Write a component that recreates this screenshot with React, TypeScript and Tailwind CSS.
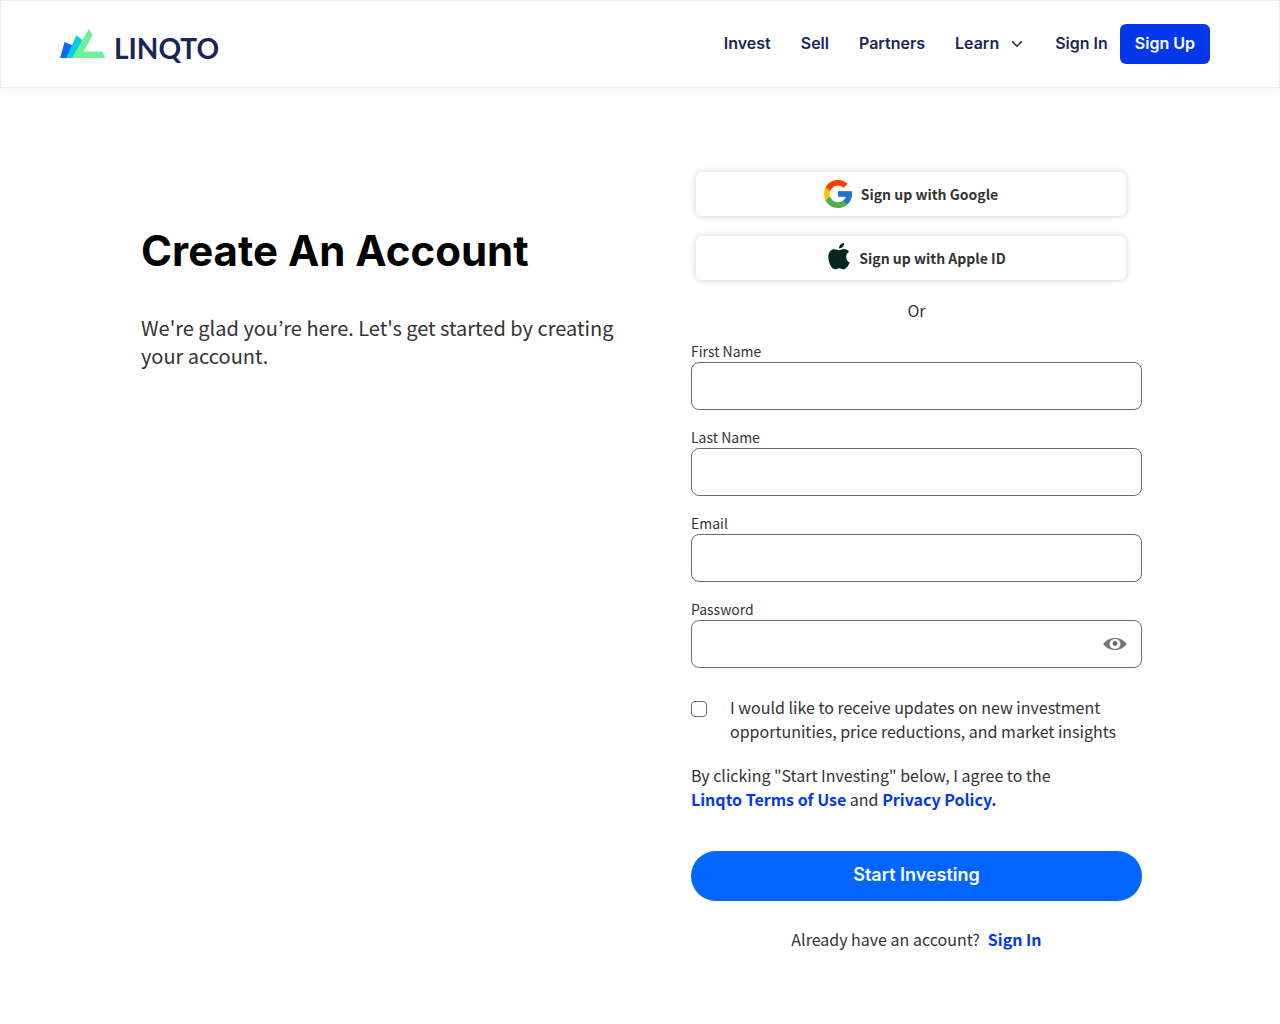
import { useState } from 'react';

const navLinks = [
  { href: '#invest', label: 'Invest' },
  { href: '#sell', label: 'Sell' },
  { href: '#partners', label: 'Partners' },
];

const Logo = () => (
  <a href="#home" className="flex items-end gap-2 text-[#1a2557]" aria-label="Linqto">
    <svg width="46" height="30" viewBox="0 0 46 30" aria-hidden="true">
      <path d="M4.7 13 L12.5 16.5 L7 29 H0 Z" fill="#0a66ff" />
      <path d="M16.4 6.3 L23 11.5 L14 29 H6.5 Z" fill="#06d0e8" />
      <path d="M28.7 0 L32.7 6.2 L23.5 22.5 H42.3 L45.5 29 H12 Z" fill="#6cf09a" />
    </svg>
    <span className="font-['Lato',sans-serif] text-[28px] leading-[22px] font-bold">LINQTO</span>
  </a>
);

const Header = () => (
  <header className="flex items-center justify-between border border-[#e8ebfd] bg-white pt-[23px] pr-[69px] pb-[23px] pl-[59px] shadow-[0_2px_8px_rgba(60,60,220,0.07)]">
    <Logo />
    <nav className="flex h-10 items-center font-['Inter',sans-serif] text-[16px] font-semibold text-[#1a2557]">
      <div className="flex gap-[30px] pb-0.5">
        {navLinks.map((link) => (
          <a key={link.href} href={link.href}>
            {link.label}
          </a>
        ))}
        <button type="button" className="flex items-center gap-3">
          Learn
          <svg width="12" height="8" viewBox="0 0 12 8" fill="none" stroke="#333" strokeWidth="1.6" aria-hidden="true" className="mt-0.5">
            <path d="M1.2 1.4 L6 6.2 L10.8 1.4" />
          </svg>
        </button>
      </div>
      <a href="#signin" className="pr-3 pb-0.5 pl-8">
        Sign In
      </a>
      <a href="#signup" className="h-10 rounded-md bg-[#0338ea] px-[15px] leading-[38px] text-white">
        Sign Up
      </a>
    </nav>
  </header>
);

const GoogleIcon = () => (
  <svg width="28" height="28" viewBox="4 4 40 40" aria-hidden="true">
    <path fill="#FFC107" d="M43.611,20.083H42V20H24v8h11.303c-1.649,4.657-6.08,8-11.303,8c-6.627,0-12-5.373-12-12s5.373-12,12-12c3.059,0,5.842,1.154,7.961,3.039l5.657-5.657C34.046,6.053,29.268,4,24,4C12.955,4,4,12.955,4,24s8.955,20,20,20s20-8.955,20-20C44,22.659,43.862,21.35,43.611,20.083z" />
    <path fill="#FF3D00" d="M6.306,14.691l6.571,4.819C14.655,15.108,18.961,12,24,12c3.059,0,5.842,1.154,7.961,3.039l5.657-5.657C34.046,6.053,29.268,4,24,4C16.318,4,9.656,8.337,6.306,14.691z" />
    <path fill="#4CAF50" d="M24,44c5.166,0,9.86-1.977,13.409-5.192l-6.19-5.238C29.211,35.091,26.715,36,24,36c-5.202,0-9.619-3.317-11.283-7.946l-6.522,5.025C9.505,39.556,16.227,44,24,44z" />
    <path fill="#1976D2" d="M43.611,20.083H42V20H24v8h11.303c-0.792,2.237-2.231,4.166-4.087,5.571l6.19,5.238C36.971,39.205,44,34,44,24C44,22.659,43.862,21.35,43.611,20.083z" />
  </svg>
);

const AppleIcon = () => (
  <svg width="22" height="27" viewBox="0 0 22 27" fill="#03251f" aria-hidden="true" className="mb-1 ml-3">
    <path d="M11 7.200 C9.500 7.200 8.500 6.200 6.300 6.200 C2.900 6.200 0.300 9.100 0.300 14 C0.300 19.600 3.600 26.300 7.200 26.300 C8.800 26.300 9.500 25.200 11.400 25.200 C13.300 25.200 13.900 26.300 15.500 26.300 C18.300 26.300 20.700 22.400 21.700 19.600 C19.500 18.700 18.200 16.600 18.200 14 C18.200 11.700 19.300 9.800 21.100 8.700 C19.800 7 17.900 6.100 15.900 6.100 C13.700 6.100 12.500 7.200 11 7.200 Z" />
    <path d="M11 5.400 C10.900 2.600 13.200 0.300 16.200 0 C16.300 2.900 14 5.500 11 5.400 Z" />
  </svg>
);

const EyeIcon = () => (
  <svg width="24" height="12" viewBox="0 0 24 12" aria-hidden="true">
    <path d="M0 6 C4 1.500 8 0 12 0 S20 1.500 24 6 C20 10.500 16 12 12 12 S4 10.500 0 6 Z" fill="#757575" />
    <ellipse cx="12" cy="6" rx="5.500" ry="4.900" fill="#fff" />
    <circle cx="12" cy="5.500" r="2.400" fill="#6b6b6b" />
  </svg>
);

interface SocialButtonProps {
  icon: React.ReactNode;
  label: string;
}

const SocialButton = ({ icon, label }: SocialButtonProps) => (
  <button
    type="button"
    className="flex h-11 items-center justify-center gap-[9px] rounded-md bg-white text-[14px] font-bold shadow-[0_0_6px_rgba(0,0,0,0.2)]"
  >
    {icon}
    {label}
  </button>
);

interface FieldProps {
  id: string;
  label: string;
  type?: string;
  children?: React.ReactNode;
}

const Field = ({ id, label, type = 'text', children }: FieldProps) => (
  <div>
    <label htmlFor={id} className="block pb-0.5 text-[14px] leading-[18px]">
      {label}
    </label>
    <div className="relative">
      <input id={id} type={type} className="block h-12 w-full rounded-lg border border-[#6b6b6b] bg-white px-4" />
      {children}
    </div>
  </div>
);

const SignUpForm = () => {
  const [showPassword, setShowPassword] = useState(false);

  return (
    <form className="text-[16px] leading-6" onSubmit={(e) => e.preventDefault()}>
      <div className="flex flex-col gap-5 pr-4 pl-[5px]">
        <SocialButton icon={<GoogleIcon />} label="Sign up with Google" />
        <SocialButton icon={<AppleIcon />} label="Sign up with Apple ID" />
      </div>
      <p className="mt-[18px] mb-5 text-center">Or</p>

      <div className="flex flex-col gap-[18px]">
        <Field id="firstName" label="First Name" />
        <Field id="lastName" label="Last Name" />
        <Field id="email" label="Email" type="email" />
        <Field id="password" label="Password" type={showPassword ? 'text' : 'password'}>
          <button
            type="button"
            aria-label="Show password"
            className="absolute inset-y-0 right-[15px] flex items-center"
            onClick={() => setShowPassword(!showPassword)}
          >
            <EyeIcon />
          </button>
        </Field>
      </div>

      <div className="mt-[27px] flex items-start">
        <input
          id="updates"
          type="checkbox"
          className="mt-1.5 mr-[23px] h-4 w-4 shrink-0 appearance-none rounded-[4px] border border-[#6b6b6b] bg-white checked:bg-[#0338ea]"
        />
        <label htmlFor="updates">
          I would like to receive updates on new investment opportunities, price reductions, and market insights
        </label>
      </div>

      <p className="mt-5">
        By clicking "Start Investing" below, I agree to the
        <br />
        <a href="#terms" className="font-bold text-[#0338ea]">
          Linqto Terms of Use
        </a>{' '}
        and{' '}
        <a href="#privacy" className="font-bold text-[#0338ea]">
          Privacy Policy.
        </a>
      </p>

      <button
        type="submit"
        className="mt-10 h-[50px] w-full rounded-full bg-[#0066ff] pb-0.5 font-['Inter',sans-serif] text-[18px] font-semibold text-white"
      >
        Start Investing
      </button>

      <p className="mt-[26px] text-center">
        Already have an account?
        <a href="#signin" className="ml-2 font-bold text-[#0338ea]">
          Sign In
        </a>
      </p>
    </form>
  );
};

export default function App() {
  return (
    <div className="min-h-screen bg-white font-['Noto_Sans_CJK_KR',sans-serif] text-[#333]">
      <Header />
      <main className="mx-auto grid max-w-[1004px] grid-cols-[1fr_451px] gap-16 pt-[84px] pb-16">
        <div className="pt-[54px] pl-[3px]">
          <h1 className="font-['Inter',sans-serif] text-[42px] leading-[50px] font-bold text-black">Create An Account</h1>
          <p className="mt-[38px] text-[20px] leading-7">
            We're glad you’re here. Let's get started by creating your account.
          </p>
        </div>
        <SignUpForm />
      </main>
    </div>
  );
}
